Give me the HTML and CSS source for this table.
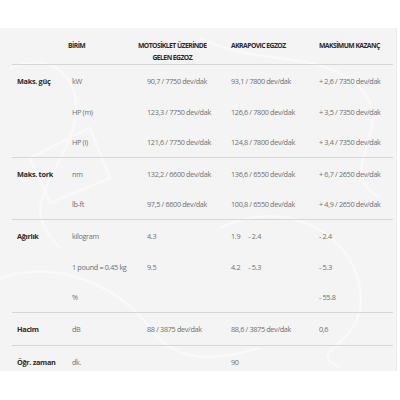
FILE: index.html
```html
<!DOCTYPE html>
<html lang="tr">
<head>
<meta charset="utf-8">
<link rel="stylesheet" href="styles.css">
</head>
<body>
<div class="panel">
  <svg class="deco" width="400" height="344" viewBox="0 0 400 344" aria-hidden="true">
    <path d="M10 40 C60 20 90 60 70 110 S20 180 60 220" />
    <path d="M0 250 C60 230 120 260 150 300 S220 330 260 320" />
    <path d="M200 10 C260 40 320 20 360 60 S330 140 380 170" />
    <path d="M220 200 C280 170 350 200 360 260 S300 320 340 340" />
    <path d="M30 130 L90 100 L110 150 L50 175 Z" />
  </svg>
  <table class="spec">
    <colgroup>
      <col class="c1"><col class="c2"><col class="c3"><col class="c4"><col class="c5">
    </colgroup>
    <thead>
      <tr class="head">
        <th></th>
        <th class="h-birim">BİRİM</th>
        <th><span class="h-moto">MOTOSİKLET ÜZERİNDE<br>GELEN EGZOZ</span></th>
        <th>AKRAPOVIC EGZOZ</th>
        <th>MAKSİMUM KAZANÇ</th>
      </tr>
    </thead>
    <tbody class="grp">
      <tr><td class="lbl">Maks. güç</td><td>kW</td><td>90,7 / 7750 dev/dak</td><td>93,1 / 7800 dev/dak</td><td>+ 2,6 / 7350 dev/dak</td></tr>
      <tr><td></td><td>HP (m)</td><td>123,3 / 7750 dev/dak</td><td>126,6 / 7800 dev/dak</td><td>+ 3,5 / 7350 dev/dak</td></tr>
      <tr><td></td><td>HP (i)</td><td>121,6 / 7750 dev/dak</td><td>124,8 / 7800 dev/dak</td><td>+ 3,4 / 7350 dev/dak</td></tr>
    </tbody>
    <tbody class="grp">
      <tr><td class="lbl">Maks. tork</td><td>nm</td><td>132,2 / 6600 dev/dak</td><td>136,6 / 6550 dev/dak</td><td>+ 6,7 / 2650 dev/dak</td></tr>
      <tr><td></td><td>lb-ft</td><td>97,5 / 6600 dev/dak</td><td>100,8 / 6550 dev/dak</td><td>+ 4,9 / 2650 dev/dak</td></tr>
    </tbody>
    <tbody class="grp">
      <tr><td class="lbl">Ağırlık</td><td>kilogram</td><td>4.3</td><td>1.9<span class="gap">- 2.4</span></td><td>- 2.4</td></tr>
      <tr><td></td><td>1 pound = 0.45 kg</td><td>9.5</td><td>4.2<span class="gap">- 5.3</span></td><td>- 5.3</td></tr>
      <tr><td></td><td>%</td><td></td><td></td><td>- 55.8</td></tr>
    </tbody>
    <tbody class="grp single">
      <tr><td class="lbl">Hacim</td><td>dB</td><td>88 / 3875 dev/dak</td><td>88,6 / 3875 dev/dak</td><td>0,6</td></tr>
    </tbody>
    <tbody class="last">
      <tr><td class="lbl">Öğr. zaman</td><td>dk.</td><td></td><td>90</td><td></td></tr>
    </tbody>
  </table>
</div>
</body>
</html>
```
FILE: styles.css
```css
html, body {
  margin: 0;
  padding: 0;
  background: #ffffff;
}
body {
  font-family: "Open Sans", "Liberation Sans", sans-serif;
  width: 400px;
  height: 400px;
  overflow: hidden;
}
.panel {
  position: relative;
  margin-top: 28px;
  width: 396px;
  height: 343px;
  background: #f4f4f4;
  overflow: hidden;
  border-right: 1px solid #ebebeb;
}
.deco {
  position: absolute;
  left: 0;
  top: 0;
  fill: none;
  stroke: #f9f9f9;
  stroke-width: 2.5;
}
.spec {
  position: relative;
  margin-left: 12px;
  width: 381px;
  border-collapse: collapse;
  table-layout: fixed;
}
.c1 { width: 55px; }
.c2 { width: 75px; }
.c3 { width: 84px; }
.c4 { width: 88px; }
.c5 { width: 79px; }
th {
  font-size: 6.8px;
  font-weight: 700;
  letter-spacing: -0.55px;
  color: #2b2b2b;
  text-align: left;
  padding: 12px 0 0 5px;
  height: 21px;
  vertical-align: top;
  line-height: 12px;
}
.head th { border-bottom: 1px solid #d6d6d6; }
.head th.h-birim { padding-left: 1px; }
.h-moto {
  display: inline-block;
  text-align: center;
  margin-left: -9px;
}
td {
  font-size: 7.3px;
  color: #707070;
  letter-spacing: -0.35px;
  padding: 0 0 0 5px;
  height: 31px;
  vertical-align: middle;
  white-space: nowrap;
}
td.lbl {
  font-weight: 700;
  color: #2b2b2b;
  letter-spacing: -0.3px;
}
.grp tr:last-child td {
  border-bottom: 1px solid #d6d6d6;
  height: 30px;
}
.grp.single tr td { height: 32px; }
.gap { margin-left: 8px; }
.last td { height: 31px; }
```
